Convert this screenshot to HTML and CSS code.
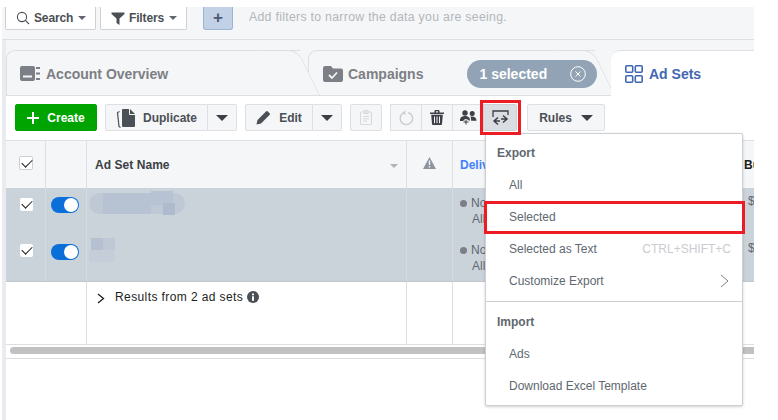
FILE: index.html
```html
<!DOCTYPE html>
<html lang="en">
<head>
<meta charset="utf-8">
<title>Ad Sets</title>
<link rel="stylesheet" href="styles.css">
</head>
<body>
<div class="page">
  <div class="filterbar">
    <button class="fbtn fbtn-search"><svg class="ico" width="14" height="14" viewBox="0 0 14 14"><circle cx="6" cy="6" r="4.6" fill="none" stroke="#4b4f56" stroke-width="1.1"/><path d="M9.4 9.4L13 13" stroke="#4b4f56" stroke-width="1.1"/></svg><span>Search</span><i class="caret-sm"></i></button>
    <button class="fbtn fbtn-filters"><svg class="ico" width="14" height="13" viewBox="0 0 14 13"><path d="M0.5 0.5H13.5V2L8.5 6.5V13L5.5 11V6.5L0.5 2Z" fill="#4b4f56"/></svg><span>Filters</span><i class="caret-sm"></i></button>
    <button class="plus">+</button>
    <span class="hint">Add filters to narrow the data you are seeing.</span>
  </div>
  <div class="card-wrap">
    <div class="tabs">
      <div class="tab tab-account">
        <svg class="ico" width="20" height="15" viewBox="0 0 20 15"><path d="M2 0H13a2 2 0 0 1 2 2V13a2 2 0 0 1-2 2H2a2 2 0 0 1-2-2V2a2 2 0 0 1 2-2Z" fill="#7c7f85"/><path d="M3 9.500H12V11.500H3Z" fill="#f5f6f7"/><path d="M16 1H20V3H16ZM16 6.500H20V8.500H16ZM16 12H20V14H16Z" fill="#7c7f85"/></svg>
        <span>Account Overview</span>
      </div>
      <div class="tab tab-campaigns">
        <svg class="ico" width="20" height="16" viewBox="0 0 20 16"><path d="M2 0H8L10 2.500H18a2 2 0 0 1 2 2V14a2 2 0 0 1-2 2H2a2 2 0 0 1-2-2V2a2 2 0 0 1 2-2Z" fill="#7c7f85"/><path d="M6 9L9 12L14 6.500" fill="none" stroke="#f5f6f7" stroke-width="1.800"/></svg>
        <span>Campaigns</span>
        <div class="pill"><span>1 selected</span><svg width="16" height="16" viewBox="0 0 16 16"><circle cx="8" cy="8" r="7.300" fill="none" stroke="#fff" stroke-width="1"/><path d="M5.500 5.500L10.500 10.500M10.500 5.500L5.500 10.500" stroke="#fff" stroke-width="1"/></svg></div>
      </div>
      <div class="tab tab-adsets">
        <svg class="ico" width="18" height="18" viewBox="0 0 18 18"><g fill="none" stroke="#4267b2" stroke-width="1.600"><rect x="0.800" y="0.800" width="6.900" height="6.400" rx="1"/><rect x="10.300" y="0.800" width="6.900" height="6.400" rx="1"/><rect x="0.800" y="10.800" width="6.900" height="6.400" rx="1"/><rect x="10.300" y="10.800" width="6.900" height="6.400" rx="1"/></g></svg>
        <span>Ad Sets</span>
      </div>
    </div>

    <div class="toolbar">
      <button class="btn btn-create"><svg width="12" height="12" viewBox="0 0 12 12"><path d="M5 0H7V5H12V7H7V12H5V7H0V5H5Z" fill="#fff"/></svg><span>Create</span></button>
      <div class="split split-dup">
        <button class="btn btn-main"><svg width="20" height="20" viewBox="0 0 20 20"><path d="M7 1H14L19 6V18a1 1 0 0 1-1 1H7a1 1 0 0 1-1-1V2a1 1 0 0 1 1-1Z" fill="#4b4f56"/><path d="M13.500 1V6.500H19" fill="none" stroke="#f5f6f7" stroke-width="1"/><path d="M3.500 3.500L1.500 4.500L3 18.500L4.500 19.500" fill="none" stroke="#4b4f56" stroke-width="1.200"/></svg><span>Duplicate</span></button>
        <button class="btn btn-arrow"><i class="caret"></i></button>
      </div>
      <div class="split split-edit">
        <button class="btn btn-main"><svg width="15" height="15" viewBox="0 0 15 15"><path d="M0.500 14.500L1.500 10L10 1.500a1.300 1.300 0 0 1 1.800 0L13.500 3.200a1.300 1.300 0 0 1 0 1.800L5 13.500Z" fill="#4b4f56"/></svg><span>Edit</span></button>
        <button class="btn btn-arrow"><i class="caret"></i></button>
      </div>
      <button class="btn btn-icon btn-clip"><svg width="12" height="15" viewBox="0 0 12 15"><path d="M1.500 2H10.500a1 1 0 0 1 1 1V14a.6.6 0 0 1-.6.6H1.100A.6.6 0 0 1 .5 14V3a1 1 0 0 1 1-1Z" fill="none" stroke="#d6d8dc"/><path d="M4 .5H8V3.500H4ZM3 6.500H9M3 8.800H9M3 11H7" fill="none" stroke="#d6d8dc"/></svg></button>
      <div class="group">
        <button class="btn btn-icon btn-g"><svg width="15" height="16" viewBox="0 0 15 16"><path d="M9.200 2.500A6.200 6.200 0 1 1 4.400 3" fill="none" stroke="#c9ccd1" stroke-width="1.400"/><path d="M6.200 0.400L3 3.100L6.400 5Z" fill="#c9ccd1"/></svg></button>
        <button class="btn btn-icon btn-g"><svg width="14" height="15" viewBox="0 0 14 15"><path d="M0 2.500H14V4H0ZM4.500 2.500V1a1 1 0 0 1 1-1H8.500a1 1 0 0 1 1 1V2.500H8V1.200H6V2.500Z" fill="#3c3f45"/><path d="M1.200 4.800H12.800L12 14a1 1 0 0 1-1 1H3a1 1 0 0 1-1-1Z" fill="#3c3f45"/><path d="M4.500 6.500V13.200M7 6.500V13.200M9.500 6.500V13.200" stroke="#f5f6f7" stroke-width="1"/></svg></button>
        <button class="btn btn-icon btn-g"><svg width="17" height="15" viewBox="0 0 17 15"><circle cx="5" cy="3" r="2.700" fill="#3c3f45"/><circle cx="12.200" cy="3.600" r="2.500" fill="#3c3f45"/><path d="M0 10.500C0 7 2.500 6 5 6S10 7 10 10.500H6.500V11H0Z" fill="#3c3f45"/><path d="M10.500 6.600C13.500 6 16.500 7 16.500 10.800H11.200C11 9 11 7.800 10.500 6.600Z" fill="#3c3f45"/><path d="M6 9V15M3 12H9" stroke="#f5f6f7" stroke-width="3"/><path d="M6 9.500V14.500M3.500 12H8.500" stroke="#3c3f45" stroke-width="1"/></svg></button>
        <button class="btn btn-icon btn-export"><svg width="17" height="16" viewBox="0 0 17 16"><path d="M1 7V1H16V5" fill="none" stroke="#3c3f45" stroke-width="1.300"/><path d="M6 7.500L2 11L6 14.500M2.500 11H8" fill="none" stroke="#3c3f45" stroke-width="1.500"/><path d="M11 5.500L15 9L11 12.500M14.500 9H9" fill="none" stroke="#3c3f45" stroke-width="1.500"/></svg></button>
      </div>
      <button class="btn btn-rules"><span>Rules</span><i class="caret"></i></button>
      <div class="hl hl-export"></div>
    </div>

    <div class="table">
      <div class="row row-head">
        <div class="cell c1"><i class="check check-head"></i></div>
        <div class="cell c2"></div>
        <div class="cell c3 name-head"><span>Ad Set Name</span><i class="caret-xs"></i></div>
        <div class="cell c4 warn-cell"><svg width="13" height="12" viewBox="0 0 13 12"><path d="M6.500 0L13 12H0Z" fill="#8d949e"/><path d="M5.800 3.500H7.200V8H5.800ZM5.800 9H7.200V10.500H5.800Z" fill="#f5f6f7"/></svg></div>
        <div class="cell c5 deliv-head"><span class="clip">Delivery</span></div>
        <div class="cell c6 budget-head">Budget</div>
      </div>
      <div class="row row-sel row-sel-a">
        <div class="cell c1"><i class="check"></i></div>
        <div class="cell c2"><i class="toggle"></i></div>
        <div class="cell c3"><svg class="blur" width="96" height="24" viewBox="0 0 96 24"><rect x="0" y="2" width="96" height="21" rx="10.500" fill="#bfc9d6"/><rect x="14" y="2" width="48" height="21" fill="#b7c3d2"/><rect x="62" y="0" width="22" height="14" fill="#b7c3d2"/><rect x="74" y="12" width="12" height="12" fill="#aebbcd"/></svg></div>
        <div class="cell c4"></div>
        <div class="cell c5 deliv"><div class="dline"><i class="dot"></i><span>No</span></div><div class="sub">All</div></div>
        <div class="cell c6 money">$</div>
      </div>
      <div class="row row-sel row-sel-b">
        <div class="cell c1"><i class="check"></i></div>
        <div class="cell c2"><i class="toggle"></i></div>
        <div class="cell c3"><svg class="blur" width="26" height="24" viewBox="0 0 26 24"><rect x="2" y="0" width="12" height="12" fill="#b5c1d0"/><rect x="14" y="0" width="12" height="12" fill="#bfc9d5"/><rect x="0" y="12" width="26" height="12" rx="3" fill="#c4cdd8"/></svg></div>
        <div class="cell c4"></div>
        <div class="cell c5 deliv"><div class="dline"><i class="dot"></i><span>No</span></div><div class="sub">All</div></div>
        <div class="cell c6 money">$</div>
      </div>
      <div class="row row-sum">
        <div class="cell c1 c-plain"></div>
        <div class="cell c2"></div>
        <div class="cell c3 sum-name"><svg class="chev" width="8" height="11" viewBox="0 0 8 11"><path d="M1 1L6.500 5.500L1 10" fill="none" stroke="#1c1e21" stroke-width="1.300"/></svg><span>Results from 2 ad sets</span><svg class="info" width="12" height="12" viewBox="0 0 12 12"><circle cx="6" cy="6" r="6" fill="#4b4f56"/><path d="M5 5.200H7V9.800H5ZM5 2.400H7V4.200H5Z" fill="#fff"/></svg></div>
        <div class="cell c4"></div>
        <div class="cell c5"></div>
        <div class="cell c6"></div>
      </div>
      <div class="scrolltrack"><div class="scrollthumb"></div></div>
    </div>
  </div>

  <div class="menu">
    <div class="menu-head">Export</div>
    <div class="menu-item">All</div>
    <div class="menu-item">Selected</div>
    <div class="menu-item"><span>Selected as Text</span><span class="shortcut">CTRL+SHIFT+C</span></div>
    <div class="menu-item"><span>Customize Export</span><svg class="menu-chev" width="9" height="14" viewBox="0 0 9 14"><path d="M1 1L8 7L1 13" fill="none" stroke="#7b7f86" stroke-width="1"/></svg></div>
    <div class="menu-sep"></div>
    <div class="menu-head">Import</div>
    <div class="menu-item">Ads</div>
    <div class="menu-item">Download Excel Template</div>
  </div>
  <div class="hl hl-selected"></div>
</div>
</body>
</html>
```
FILE: styles.css
```css
* { box-sizing: border-box; }
html, body { margin: 0; padding: 0; background: #fff; overflow: hidden; }
body { font-family: "Liberation Sans", Arial, sans-serif; font-size: 12px; color: #4b4f56; height: 420px; }
button { font-family: inherit; margin: 0; padding: 0; cursor: default; }
i { display: block; font-style: normal; }
svg { display: block; flex: none; }

.page { position: relative; width: 752px; height: 413px; margin: 7px 0 0 2px; }

/* filter bar */
.filterbar { display: flex; align-items: flex-start; height: 33px; padding-left: 3px; background: #f5f6f7; border-bottom: 1px solid #dddfe2; }
.fbtn { display: flex; align-items: center; height: 23px; background: #fff; border: 1px solid #ced0d4; border-top: 0; border-radius: 0 0 2px 2px; font-size: 12px; font-weight: 700; color: #4b4f56; padding-left: 10px; letter-spacing: -.15px; }
.fbtn span { margin-left: 4px; }
.fbtn-search { width: 91px; }
.fbtn-filters { width: 87px; margin-left: 4px; }
.caret-sm { width: 0; height: 0; margin-left: 5px; border: 4px solid transparent; border-top: 4px solid #606770; border-bottom: 0; }
.plus { width: 30px; height: 23px; margin-left: 16px; background: #c3d1e6; border: 1px solid #9db3d8; border-top: 0; border-radius: 0 0 3px 3px; font-size: 17px; line-height: 20px; color: #4b5a74; font-weight: 700; }
.hint { margin-left: 16px; line-height: 20px; color: #b3b6bb; font-size: 12.3px; letter-spacing: .29px; }

/* tabs */
.card-wrap { height: 380px; padding-left: 4px; background: #e9ebee; }
.tabs { position: relative; display: flex; height: 56px; padding-top: 10px; background: #f5f6f7; border-bottom: 1px solid #dddfe2; }
.tab { position: relative; display: flex; align-items: center; height: 45px; font-size: 14px; font-weight: 700; color: #7c7f85; background: #f5f6f7; border-top: 1px solid #dddfe2; border-left: 1px solid #dddfe2; border-radius: 9px 0 0 0; padding-top: 1px; }
.tab .ico { margin-right: 6px; }
.tab-account { width: 294px; padding-left: 13px; z-index: 2; }
.tab-account::after, .tab-campaigns::after { content: ""; position: absolute; top: -1px; bottom: 0; right: -20px; width: 34px; background: #f5f6f7; border-top: 1px solid #dddfe2; border-right: 1px solid #dddfe2; border-radius: 0 10px 0 0; transform: skewX(26deg); transform-origin: right bottom; z-index: -1; }
.tab-campaigns { width: 287px; margin-left: 8px; padding-left: 14px; z-index: 1; }
.tab-campaigns .ico { margin-right: 5px; }
.tab-adsets { width: 143px; margin-left: 16px; height: 46px; padding-left: 14px; background: #fff; color: #4267b2; border-left: 0; z-index: 3; }
.pill { position: relative; z-index: 1; flex: none; display: flex; align-items: center; justify-content: space-between; width: 130px; height: 28px; margin-left: 44px; padding: 0 11px 0 12px; background: #91a3b5; border-radius: 14px; color: #fff; }

/* toolbar */
.toolbar { position: relative; display: flex; align-items: flex-start; gap: 8px; height: 44px; padding: 8px 0 0 9px; background: #fff; }
.btn { display: flex; align-items: center; justify-content: center; height: 27px; background: #f5f6f7; border: 1px solid #dddfe2; border-radius: 2px; font-size: 12px; font-weight: 700; color: #4b4f56; }
.btn-create { width: 82px; gap: 8px; background: #00a400; border-color: #00a400; color: #fff; }
.split { display: flex; }
.split .btn-main { border-radius: 2px 0 0 2px; gap: 7px; }
.split .btn-arrow { border-left: 0; border-radius: 0 2px 2px 0; }
.split-dup .btn-main { width: 103px; }
.split-edit .btn-main { width: 68px; gap: 8px; }
.btn-arrow { width: 29px; }
.caret { width: 0; height: 0; border: 6px solid transparent; border-top: 6px solid #3c3f45; border-bottom: 0; }
.btn-icon { width: 32px; }
.group { display: flex; }
.btn-g { width: 31px; border-right: 0; border-radius: 0; }
.btn-export { width: 34px; background: #dadde1; border-color: #ced0d4; border-radius: 0 2px 2px 0; }
.btn-rules { width: 78px; gap: 9px; margin-left: 2px; }

/* highlights */
.hl { position: absolute; border: 3px solid #ed1c24; z-index: 6; pointer-events: none; }
.hl-export { left: 474px; top: 4px; width: 41px; height: 35px; }
.hl-selected { left: 482px; top: 194px; width: 261px; height: 33px; }

/* table */
.table { height: 280px; background: #fff; border-top: 1px solid #dddfe2; }
.row { display: flex; }
.cell { border-right: 1px solid #dddfe2; flex: none; }
.c1 { width: 40px; padding: 10px 0 0 14px; }
.c2 { width: 41px; padding: 9px 0 0 5px; }
.c3 { width: 320px; padding: 3px 0 0 2px; }
.c4 { width: 46px; }
.c5 { width: 291px; border-right: 0; }
.c6 { flex: 1; border-right: 0; overflow: hidden; white-space: nowrap; }
.clip { display: block; width: 25px; overflow: hidden; white-space: nowrap; }
.row-head { height: 47px; background: #f5f6f7; }
.row-head .cell { font-weight: 700; color: #1c1e21; }
.row-head .c1 { padding: 15px 0 0 13px; }
.name-head { display: flex; justify-content: space-between; padding: 17px 8px 0 8px; letter-spacing: .05px; }
.row-head .name-head { color: #3c3f45; }
.caret-xs { width: 0; height: 0; margin-top: 6px; border: 4px solid transparent; border-top: 4px solid #b0b3b8; border-bottom: 0; }
.warn-cell { display: flex; justify-content: center; padding-top: 16px; }
.row-head .deliv-head { padding: 17px 0 0 7px; color: #4080ff; }
.budget-head { padding: 17px 0 0 0; }
.row-sel { background: #cbd3da; }
.row-sel .cell { border-right-color: #d6dbe0; }
.row-sel-a { height: 47px; }
.row-sel-b { height: 47px; border-bottom: 1px solid #c0c8d0; }
.row-sel-b .c1, .row-sel-b .c2 { padding-top: 9px; }
.check { position: relative; width: 13px; height: 13px; background: #fff; border-radius: 2px; }
.check-head { width: 14px; height: 14px; border: 1px solid #ccd0d5; }
.check::after { content: ""; position: absolute; left: 2px; top: 2px; width: 9px; height: 5px; border-left: 1.6px solid #1c1e21; border-bottom: 1.6px solid #1c1e21; transform: rotate(-45deg); }
.check-head::after { left: 1.5px; top: 1.5px; }
.toggle { position: relative; width: 28px; height: 16px; border-radius: 8px; background: #0a6fd8; }
.toggle::after { content: ""; position: absolute; right: 1px; top: 1px; width: 14px; height: 14px; border-radius: 50%; background: #fff; }
.deliv { padding: 7px 0 0 7px; line-height: 16px; color: #606770; white-space: nowrap; }
.dline { display: flex; align-items: center; gap: 4px; }
.dot { width: 7px; height: 7px; border-radius: 50%; background: #7c7f85; }
.sub { margin-left: 12px; }
.money { padding-top: 6px; padding-left: 4px; color: #606770; }
.row-sum { height: 63px; border-bottom: 1px solid #dddfe2; }
.row-sum .c1 { border-right-color: transparent; }
.sum-name { display: flex; align-items: flex-start; padding: 8px 0 0 10px; color: #1c1e21; letter-spacing: .4px; }
.chev { margin: 3px 10px 0 0; }
.info { margin: 1px 0 0 4px; }
.scrolltrack { height: 14px; padding: 2px 0 0 4px; border-bottom: 1px solid #dddfe2; }
.scrollthumb { height: 7px; border-radius: 4px 0 0 4px; background: #c1c1c1; }

/* dropdown */
.menu { position: absolute; left: 483px; top: 126px; z-index: 5; width: 258px; height: 273px; padding-top: 3px; background: #fff; border: 1px solid #ccd0d5; border-radius: 2px; box-shadow: 0 1px 3px rgba(0,0,0,.18); color: #606770; }
.menu-head { height: 32px; padding-left: 11px; line-height: 32px; font-weight: 700; color: #606770; }
.menu-item { display: flex; align-items: center; justify-content: space-between; height: 32px; padding: 0 11px 0 23px; font-size: 12px; }
.menu-chev { margin-right: 2px; }
.shortcut { color: #c9ccd1; }
.menu-sep { height: 1px; margin: 4px 0 4px; background: #ccd0d5; }
```
